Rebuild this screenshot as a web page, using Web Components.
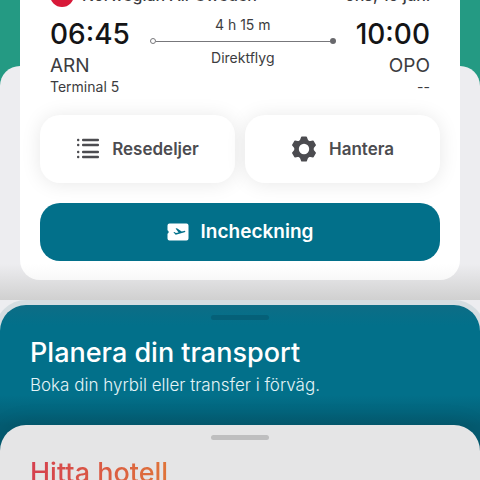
<!DOCTYPE html>
<html lang="sv">
<head>
<meta charset="utf-8">
<meta name="viewport" content="width=device-width, initial-scale=1">
<title>Min resa</title>
<style>
  html, body { height: 100%; }
  body {
    margin: 0;
    overflow: hidden;
    background: #ededf0;
    font-family: Inter, "Liberation Sans", sans-serif;
    color: #3c3c40;
  }
</style>
</head>
<body>
<trip-page>
  <flight-card>
    <flight-header slot="header">
      <span slot="airline">Norwegian Air Sweden</span>
      <span slot="date">ons, 15 juni</span>
    </flight-header>
    <flight-leg>
      <flight-stop slot="from">
        <span slot="time">06:45</span>
        <span slot="code">ARN</span>
        <span slot="terminal">Terminal 5</span>
      </flight-stop>
      <flight-route>
        <span slot="duration">4 h 15 m</span>
        <span slot="kind">Direktflyg</span>
      </flight-route>
      <flight-stop slot="to" align="end">
        <span slot="time">10:00</span>
        <span slot="code">OPO</span>
        <span slot="terminal">--</span>
      </flight-stop>
    </flight-leg>
    <action-button slot="actions" icon="list">Resedeljer</action-button>
    <action-button slot="actions" icon="gear">Hantera</action-button>
    <action-button slot="primary" icon="ticket" primary>Incheckning</action-button>
  </flight-card>
  <bottom-sheet slot="sheets" tone="teal">
    <span slot="title">Planera din transport</span>
    <span slot="text">Boka din hyrbil eller transfer i förväg.</span>
  </bottom-sheet>
  <bottom-sheet slot="sheets" tone="light">
    <span slot="title">Hitta hotell</span>
  </bottom-sheet>
</trip-page>

<script>
function define(name, markup, setup) {
  const template = document.createElement('template');
  template.innerHTML = markup;
  customElements.define(name, class extends HTMLElement {
    constructor() {
      super();
      this.attachShadow({ mode: 'open' }).append(template.content.cloneNode(true));
    }
    connectedCallback() {
      if (setup) setup(this, this.shadowRoot);
    }
  });
}

define('trip-page', `
  <style>
    :host { display: block; height: 100%; overflow: hidden; background: linear-gradient(#249a83 0 100px, #ededf0 100px); }
    main { display: grid; grid-template-rows: 66px auto; }
    .panel { grid-area: 2 / 1; background: linear-gradient(#ededf0 0 calc(100% - 36px), #d0d0d0); border-radius: 20px 20px 0 0; }
    .card { grid-area: 1 / 1 / span 2; padding: 0 20px 20px; }
  </style>
  <main>
    <div class="panel"></div>
    <div class="card"><slot></slot></div>
  </main>
  <slot name="sheets"></slot>
`);

define('flight-card', `
  <style>
    :host { display: block; background: linear-gradient(#fff 0 calc(100% - 16px), #f8f8f8); border-radius: 0 0 20px 20px; padding: 0 20px 19px; }
    .actions { display: grid; grid-template-columns: 1fr 1fr; gap: 10px; margin: 20px 0; }
  </style>
  <slot name="header"></slot>
  <slot></slot>
  <div class="actions"><slot name="actions"></slot></div>
  <slot name="primary"></slot>
`);

define('flight-header', `
  <style>
    :host { display: flex; align-items: center; gap: 8px; margin: -17px 10px 0; height: 24px; font-size: 16px; font-weight: 500; line-height: 22px; color: #3c3c40; white-space: nowrap; }
    i { width: 24px; height: 24px; border-radius: 50%; background: #d81939; }
    .date { margin-left: auto; }
  </style>
  <i></i>
  <slot name="airline"></slot>
  <div class="date"><slot name="date"></slot></div>
`);

define('flight-leg', `
  <style>
    :host { display: flex; padding: 9px 10px 0; gap: 20px; }
    .route { flex: 1; }
  </style>
  <slot name="from"></slot>
  <div class="route"><slot></slot></div>
  <slot name="to"></slot>
`);

define('flight-stop', `
  <style>
    :host { display: flex; flex-direction: column; }
    :host([align="end"]) { text-align: right; }
    .time { font-size: 28px; line-height: 36px; font-weight: 500; color: #141416; }
    .code { font-size: 19px; line-height: 27px; }
    .terminal { font-size: 14px; line-height: 16px; }
  </style>
  <div class="time"><slot name="time"></slot></div>
  <div class="code"><slot name="code"></slot></div>
  <div class="terminal"><slot name="terminal"></slot></div>
`);

define('flight-route', `
  <style>
    :host { display: flex; flex-direction: column; text-align: center; font-size: 14px; line-height: 18px; }
    .line { display: flex; align-items: center; height: 14px; }
    .line::before { content: ""; box-sizing: border-box; width: 6px; height: 6px; border: 1px solid #77777b; border-radius: 50%; }
    .line::after { content: ""; width: 6px; height: 6px; background: #68686c; border-radius: 50%; }
    hr { flex: 1; margin: 0; border: 0; height: 1px; background: #77777b; }
    .kind { padding-top: 1px; }
  </style>
  <slot name="duration"></slot>
  <div class="line"><hr></div>
  <div class="kind"><slot name="kind"></slot></div>
`);

const icons = {
  list: `<svg viewBox="0 0 24 24" width="24" height="24" aria-hidden="true"><g fill="currentColor">
    <rect x="1" y="1.800" width="2.400" height="2.400" rx="1"/><rect x="1" y="6.800" width="2.400" height="2.400" rx="1"/>
    <rect x="1" y="13.800" width="2.400" height="2.400" rx="1"/><rect x="1" y="18.800" width="2.400" height="2.400" rx="1"/>
    <rect x="6" y="1.800" width="17" height="2.400" rx="1"/><rect x="6" y="6.800" width="17" height="2.400" rx="1"/>
    <rect x="6" y="13.800" width="17" height="2.400" rx="1"/><rect x="6" y="18.800" width="17" height="2.400" rx="1"/></g></svg>`,
  gear: `<svg viewBox="-12 -12 24 24" width="26" height="26" aria-hidden="true"><defs><mask id="m"><rect x="-12" y="-12" width="24" height="24" fill="#fff"/><circle r="4.800" fill="#000"/></mask></defs>
    <g mask="url(#m)" fill="currentColor"><circle r="9"/>
    <g stroke="currentColor" stroke-width="1.400" stroke-linejoin="round"><path id="p" d="M-2-10.800h4L3.200-7.500h-6.400z"/>
    <use href="#p" transform="rotate(60)"/><use href="#p" transform="rotate(120)"/><use href="#p" transform="rotate(180)"/><use href="#p" transform="rotate(240)"/><use href="#p" transform="rotate(300)"/></g></g></svg>`,
  ticket: `<svg viewBox="0 0 22 18" width="22" height="18" aria-hidden="true">
    <path fill="#fff" d="M2.500 .5h17a2 2 0 0 1 2 2v13a2 2 0 0 1-2 2h-17a2 2 0 0 1-2-2v-4.800a1.800 1.800 0 0 0 0-3.400V2.500a2 2 0 0 1 2-2z"/>
    <path fill="#02708a" d="M6.400 9.200l1-.2 1.500 1.100 2.700-.7-3-3.900 1.300-.3 4.800 3.300 2.400-.6c1.300-.3 1.800 1 .5 1.400l-8.900 2.400z"/></svg>`
};

define('action-button', `
  <style>
    :host { display: block; }
    button { display: flex; width: 100%; align-items: center; justify-content: center; gap: 12px; border: 0; margin: 0; padding: 21px 16px; border-radius: 20px; background: #fff; color: #4c4c50; font: 600 17px/26px Inter, "Liberation Sans", sans-serif; box-shadow: 0 1px 20px #00000018; cursor: pointer; }
    :host([primary]) button { padding: 16px; background: #02708a; color: #fff; font-size: 19px; box-shadow: none; }
    .icon { display: flex; }
  </style>
  <button type="button"><span class="icon"></span><slot></slot></button>
`, (host, root) => {
  root.querySelector('.icon').innerHTML = icons[host.getAttribute('icon')];
});

define('bottom-sheet', `
  <style>
    :host { display: block; position: relative; padding: 10px 30px 53px; border-radius: 26px 26px 0 0; }
    :host([tone="teal"]) { margin-top: 5px; background: linear-gradient(#0d6d86, #02708a 20px 90px, #045c72 120px); color: #fff; box-shadow: 0 0 0 5px #d5dde1; }
    :host([tone="light"]) { margin-top: -26px; background: #e5e5e6; box-shadow: 0 -4px 20px #00000018; }
    .grip { width: 58px; height: 5px; margin: 0 auto 15px; border-radius: 3px; background: #056078; }
    :host([tone="light"]) .grip { background: #bebebf; }
    h2 { margin: 0; font-size: 27px; line-height: 36px; font-weight: 500; }
    :host([tone="light"]) h2 { width: fit-content; color: transparent; background: linear-gradient(90deg, #d5404f, #df7439); background-clip: text; -webkit-background-clip: text; }
    p { margin: 1px 0 0; font-size: 17px; line-height: 26px; font-weight: 300; color: #e4f4f7; }
  </style>
  <div class="grip"></div>
  <h2><slot name="title"></slot></h2>
  <p><slot name="text"></slot></p>
`);
</script>
</body>
</html>
